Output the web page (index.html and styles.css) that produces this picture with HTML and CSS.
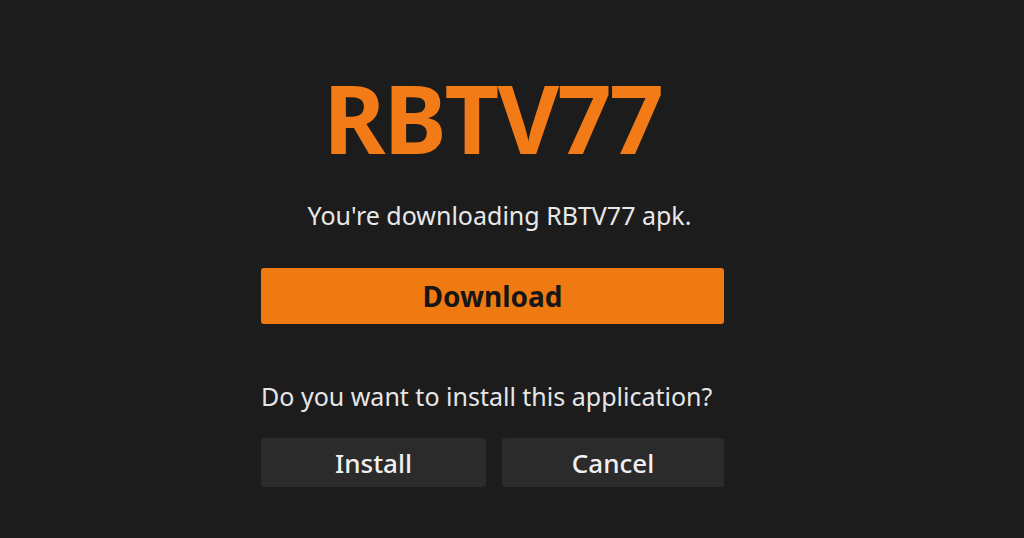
FILE: index.html
```html
<!DOCTYPE html>
<html>
<head>
<meta charset="utf-8">
<link rel="stylesheet" href="styles.css">
</head>
<body>
<main class="dialog">
  <h1 class="title">RBTV77</h1>
  <p class="subtitle">You're downloading RBTV77 apk.</p>
  <button class="btn btn-download">Download</button>
  <p class="question">Do you want to install this application?</p>
  <div class="actions">
    <button class="btn btn-dark">Install</button>
    <button class="btn btn-dark">Cancel</button>
  </div>
</main>
</body>
</html>
```
FILE: styles.css
```css
html, body {
  margin: 0;
  padding: 0;
  background: #1c1c1c;
  width: 1024px;
  height: 538px;
  overflow: hidden;
  font-family: "Noto Sans", "Open Sans", sans-serif;
}
.dialog {
  width: 463px;
  margin-left: 261px;
  display: flex;
  flex-direction: column;
}
.title {
  margin: 62px 0 0 0;
  text-align: center;
  font-size: 95px;
  line-height: 110px;
  font-weight: 700;
  color: #f27b17;
  letter-spacing: -2px;
}
.subtitle {
  margin: 26px 0 0 0;
  text-align: center;
  font-size: 25px;
  line-height: 34px;
  color: #e8e8e8;
  padding-left: 14px;
}
.btn {
  border: none;
  font-family: inherit;
  padding: 0;
  border-radius: 3px;
}
.btn-download {
  margin-top: 36px;
  height: 56px;
  background: #f07a12;
  color: #161616;
  font-size: 28px;
  font-weight: 700;
}
.question {
  margin: 55px 0 0 0;
  font-size: 25px;
  line-height: 34px;
  color: #e6e6e6;
}
.actions {
  margin-top: 25px;
  display: grid;
  grid-template-columns: 225px 222px;
  column-gap: 16px;
}
.btn-dark {
  height: 49px;
  background: #2b2b2b;
  color: #f0f0f0;
  font-size: 26px;
  font-weight: 500;
}
```
